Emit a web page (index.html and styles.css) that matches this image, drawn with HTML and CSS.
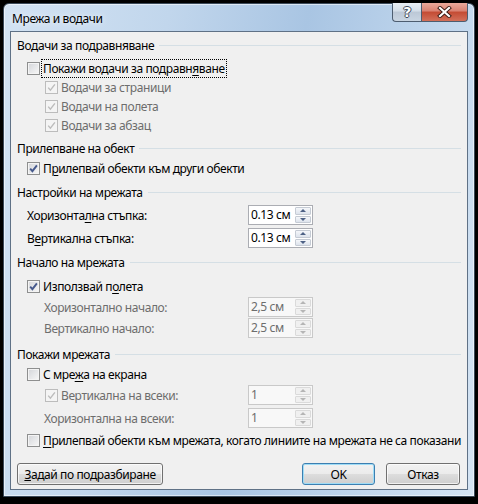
FILE: index.html
```html
<!DOCTYPE html>
<html lang="bg">
<head>
    <meta charset="UTF-8">
    <title>Мрежа и водачи</title>
    <link rel="stylesheet" href="styles.css">
</head>
<body>
    <div class="window">
        <div class="titlebar">
            <span class="title">Мрежа и водачи</span>
            <div class="caption-buttons">
                <span class="cap-btn help">?</span>
                <span class="cap-btn close">
                    <svg width="15" height="12" viewBox="0 0 15 12">
                        <path d="M3 2 L12 10 M12 2 L3 10" stroke="#3a1a14" stroke-width="4" stroke-linecap="square"/>
                        <path d="M3 2 L12 10 M12 2 L3 10" stroke="#fff" stroke-width="2.2" stroke-linecap="square"/>
                    </svg>
                </span>
            </div>
        </div>

        <div class="client">
            <!-- Водачи за подравняване -->
            <div class="group-title">Водачи за подравняване</div>
            <div class="check-row gap-6">
                <span class="cb"></span>
                <span class="label focused">Покажи водачи за подравн<u>я</u>ване</span>
            </div>
            <div class="check-row sub disabled">
                <span class="cb"><svg class="tick" viewBox="0 0 11 11"><path d="M2.2 5.6 L4.4 8.2 L8.9 2.4"/></svg></span>
                <span class="label">Водачи за страници</span>
            </div>
            <div class="check-row sub disabled">
                <span class="cb"><svg class="tick" viewBox="0 0 11 11"><path d="M2.2 5.6 L4.4 8.2 L8.9 2.4"/></svg></span>
                <span class="label">Водачи на полета</span>
            </div>
            <div class="check-row sub disabled">
                <span class="cb"><svg class="tick" viewBox="0 0 11 11"><path d="M2.2 5.6 L4.4 8.2 L8.9 2.4"/></svg></span>
                <span class="label">Водачи за абзац</span>
            </div>

            <!-- Прилепване на обект -->
            <div class="group-title gap-5">Прилепване на обект</div>
            <div class="check-row gap-3">
                <span class="cb"><svg class="tick" viewBox="0 0 11 11"><path d="M2.2 5.6 L4.4 8.2 L8.9 2.4"/></svg></span>
                <span class="label">П<u>р</u>илепвай обекти към други обекти</span>
            </div>

            <!-- Настройки на мрежата -->
            <div class="group-title gap-6">Настройки на мрежата</div>
            <div class="field-row gap-5">
                <span class="label">Хоризонта<u>л</u>на стъпка:</span>
                <div class="spin">
                    <span class="spin-value">0.13 см</span>
                    <span class="spin-btns"><span class="up"></span><span class="down"></span></span>
                </div>
            </div>
            <div class="field-row gap-3">
                <span class="label">В<u>е</u>ртикална стъпка:</span>
                <div class="spin">
                    <span class="spin-value">0.13 см</span>
                    <span class="spin-btns"><span class="up"></span><span class="down"></span></span>
                </div>
            </div>

            <!-- Начало на мрежата -->
            <div class="group-title gap-6">Начало на мрежата</div>
            <div class="check-row gap-7">
                <span class="cb"><svg class="tick" viewBox="0 0 11 11"><path d="M2.2 5.6 L4.4 8.2 L8.9 2.4"/></svg></span>
                <span class="label">Използвай п<u>о</u>лета</span>
            </div>
            <div class="field-row sub disabled gap-1">
                <span class="label">Хоризонтално начало:</span>
                <div class="spin">
                    <span class="spin-value">2,5 см</span>
                    <span class="spin-btns"><span class="up"></span><span class="down"></span></span>
                </div>
            </div>
            <div class="field-row sub disabled gap-1">
                <span class="label">Вертикално начало:</span>
                <div class="spin">
                    <span class="spin-value">2,5 см</span>
                    <span class="spin-btns"><span class="up"></span><span class="down"></span></span>
                </div>
            </div>

            <!-- Покажи мрежата -->
            <div class="group-title gap-8">Покажи мрежата</div>
            <div class="check-row gap-3">
                <span class="cb"></span>
                <span class="label">С мре<u>ж</u>а на екрана</span>
            </div>
            <div class="field-row sub disabled gap-1">
                <span class="check-label">
                    <span class="cb"><svg class="tick" viewBox="0 0 11 11"><path d="M2.2 5.6 L4.4 8.2 L8.9 2.4"/></svg></span>
                    <span class="label">Вертикална на всеки:</span>
                </span>
                <div class="spin">
                    <span class="spin-value">1</span>
                    <span class="spin-btns"><span class="up"></span><span class="down"></span></span>
                </div>
            </div>
            <div class="field-row sub disabled gap-3">
                <span class="label">Хоризонтална на всеки:</span>
                <div class="spin">
                    <span class="spin-value">1</span>
                    <span class="spin-btns"><span class="up"></span><span class="down"></span></span>
                </div>
            </div>
            <div class="check-row gap-3">
                <span class="cb"></span>
                <span class="label"><u>П</u>рилепвай обекти към мрежата, когато линиите на мрежата не са показани</span>
            </div>

            <div class="buttons">
                <button type="button" class="btn wide"><u>З</u>адай по подразбиране</button>
                <div class="btn-pair">
                    <button type="button" class="btn default">OK</button>
                    <button type="button" class="btn">Отказ</button>
                </div>
            </div>
        </div>
    </div>
</body>
</html>
```

FILE: styles.css
```css
body {
    margin: 0;
    background: #000;
    font-family: "Noto Sans", "Open Sans", sans-serif;
    font-size: 12px;
    letter-spacing: -0.4px;
    color: #000;
}

.window {
    margin: 3px;
    width: 472px;
    height: 494px;
    box-sizing: border-box;
    border: 1px solid #3b4a5a;
    border-radius: 6px 6px 0 0;
    background: linear-gradient(100deg, #d3e3f3 0%, #c1d6ec 30%, #a9c5e3 55%, #bcd3eb 75%, #d6e5f4 100%);
    box-shadow: inset 0 0 0 1px rgba(255, 255, 255, 0.55);
    display: flex;
    flex-direction: column;
}

.titlebar {
    height: 27px;
    display: flex;
    justify-content: space-between;
    align-items: flex-start;
    padding-left: 8px;
}

.title {
    margin-top: 6px;
    font-size: 12px;
    text-shadow: 0 0 6px rgba(255, 255, 255, 0.9);
}

.caption-buttons {
    display: flex;
    margin-right: 6px;
    margin-top: -1px;
}

.cap-btn {
    height: 19px;
    box-sizing: border-box;
    border: 1px solid #4d5d70;
    border-top: none;
    display: flex;
    align-items: center;
    justify-content: center;
}

.help {
    width: 29px;
    border-right: none;
    border-radius: 0 0 0 4px;
    background: linear-gradient(#e9eef4 0%, #d3dde8 45%, #bcc8d6 50%, #c9d5e2 100%);
    color: #fff;
    font-weight: bold;
    font-size: 14px;
    font-family: "DejaVu Sans", sans-serif;
    text-shadow: -1px 0 #3d4a5a, 1px 0 #3d4a5a, 0 -1px #3d4a5a, 0 1px #3d4a5a;
}

.close {
    width: 47px;
    border-radius: 0 0 4px 0;
    background: linear-gradient(#e9a99b 0%, #d98171 45%, #c44b33 50%, #d2705a 100%);
}

.client {
    flex: 1;
    margin: 0 6px 6px;
    border: 1px solid #5f7186;
    background: #f0f0f0;
    padding: 5px 6px 0;
}

/* group headers with the line after the text */
.group-title {
    height: 16px;
    display: flex;
    align-items: center;
    gap: 5px;
    white-space: nowrap;
}

.group-title::after {
    content: "";
    flex: 1;
    height: 1px;
    background: #d5dfe5;
}

.check-row {
    height: 19px;
    display: flex;
    align-items: center;
    gap: 3px;
    margin-left: 10px;
}

.check-row.sub {
    margin-left: 28px;
}

.check-label {
    display: flex;
    align-items: center;
    gap: 3px;
    margin-left: 1px;
}

.label {
    white-space: nowrap;
}

.label u {
    text-decoration-thickness: 1px;
    text-underline-offset: 2px;
}

.focused {
    outline: 1px dotted #000;
    outline-offset: 0;
    padding: 0 1px;
    margin-left: -1px;
}

.disabled .label,
.disabled .spin-value {
    color: #6d6d6d;
}

/* checkboxes */
.cb {
    width: 13px;
    height: 13px;
    flex: none;
    box-sizing: border-box;
    border: 1px solid #8e8f8f;
    background: linear-gradient(135deg, #d3d5d9, #f8f8f8);
    box-shadow: inset 0 0 0 1px #f4f4f4;
    position: relative;
}

.tick {
    position: absolute;
    left: 0;
    top: 0;
    width: 11px;
    height: 11px;
    fill: none;
    stroke: #46598c;
    stroke-width: 1.9;
}

.disabled .cb {
    border-color: #bcbcbc;
    background: #f4f4f4;
}

.disabled .tick {
    stroke: #bcbcbc;
    stroke-width: 1.4;
}

/* rows with a spin box on the right */
.field-row {
    height: 20px;
    width: 286px;
    margin-left: 10px;
    box-sizing: border-box;
    display: flex;
    align-items: center;
    justify-content: space-between;
}

.field-row.sub {
    padding-left: 17px;
}

.field-row.sub .check-label {
    margin-left: 1px;
}

.spin {
    width: 65px;
    height: 20px;
    box-sizing: border-box;
    border: 1px solid #abadb3;
    background: #fff;
    display: flex;
}

.spin-value {
    flex: 1;
    padding-left: 2px;
    line-height: 18px;
}

.spin-btns {
    width: 16px;
    display: flex;
    flex-direction: column;
    gap: 1px;
    padding: 1px 1px 1px 0;
}

.spin-btns span {
    flex: 1;
    border: 1px solid #c5cbd4;
    border-radius: 1px;
    background: linear-gradient(#f5f7fa, #dde3ec);
    display: flex;
    align-items: center;
    justify-content: center;
}

.spin-btns span::before {
    content: "";
    border-left: 3px solid transparent;
    border-right: 3px solid transparent;
}

.up::before {
    border-bottom: 3px solid #4d6185;
}

.down::before {
    border-top: 3px solid #4d6185;
}

.disabled .spin {
    border-color: #c9c9c9;
    background: #f8f8f8;
}

.disabled .spin-btns span {
    border-color: #dadada;
    background: #f0f0f0;
}

.disabled .up::before {
    border-bottom-color: #b5b5b5;
}

.disabled .down::before {
    border-top-color: #b5b5b5;
}

/* vertical spacing between rows */
.gap-1 { margin-top: 1px; }
.gap-3 { margin-top: 3px; }
.gap-5 { margin-top: 5px; }
.gap-6 { margin-top: 6px; }
.gap-7 { margin-top: 7px; }
.gap-8 { margin-top: 8px; }

/* bottom buttons */
.buttons {
    margin-top: 13px;
    display: flex;
    justify-content: space-between;
    padding-right: 1px;
}

.btn-pair {
    display: flex;
    gap: 11px;
}

.btn {
    height: 22px;
    width: 74px;
    padding: 0;
    font-family: inherit;
    font-size: 12px;
    letter-spacing: inherit;
    color: #000;
    border: 1px solid #707070;
    border-radius: 3px;
    background: linear-gradient(#f2f2f2 0%, #ebebeb 50%, #dddddd 50%, #cfcfcf 100%);
    box-shadow: inset 0 0 0 1px rgba(255, 255, 255, 0.7);
}

.btn.wide {
    width: 146px;
}

.btn.default {
    width: 73px;
    border-color: #3c7fb1;
    box-shadow: inset 0 0 0 1px #9fdcf6;
}
```
